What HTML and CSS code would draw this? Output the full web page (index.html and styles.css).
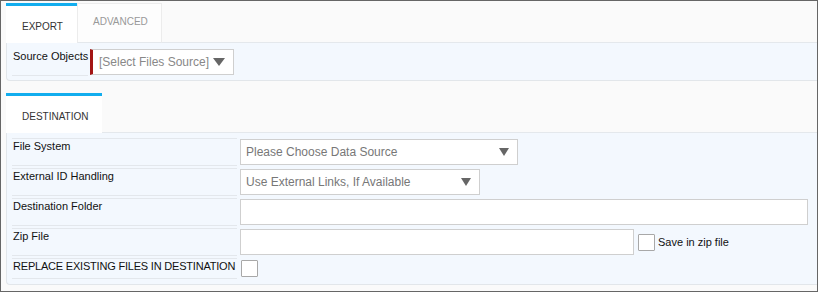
FILE: index.html
```html
<!DOCTYPE html>
<html lang="en">
<head>
  <meta charset="UTF-8" />
  <title>Export</title>
  <link rel="stylesheet" href="styles.css">
</head>
<body>
  <div class="frame">
    <div class="tabs">
      <div class="tab active export-tab">EXPORT</div>
      <div class="tab advanced-tab">ADVANCED</div>
      <div class="tab-fill"></div>
    </div>
    <div class="panel source">
      <div class="row">
        <div class="label source-label">Source Objects</div>
        <div class="select required source-select"><span>[Select Files Source]</span><span class="caret"></span></div>
      </div>
    </div>

    <div class="tabs second">
      <div class="tab active dest-tab">DESTINATION</div>
      <div class="tab-fill"></div>
    </div>
    <div class="panel dest">
      <div class="row">
        <div class="label">File System</div>
        <div class="select fs-select"><span>Please Choose Data Source</span><span class="caret"></span></div>
      </div>
      <div class="row">
        <div class="label">External ID Handling</div>
        <div class="select ext-select"><span>Use External Links, If Available</span><span class="caret"></span></div>
      </div>
      <div class="row">
        <div class="label">Destination Folder</div>
        <input class="text-input folder-input" type="text">
      </div>
      <div class="row">
        <div class="label">Zip File</div>
        <div class="inline">
          <input class="text-input zip-input" type="text">
          <span class="check"></span>
          <span class="check-text">Save in zip file</span>
        </div>
      </div>
      <div class="row last">
        <div class="label replace-label">REPLACE EXISTING FILES IN DESTINATION</div>
        <span class="check replace-check"></span>
      </div>
    </div>
  </div>
</body>
</html>
```

FILE: styles.css
```css
* { box-sizing: border-box; }
body {
  margin: 0;
  font-family: "Liberation Sans", Arial, sans-serif;
  font-size: 11px;
  color: #111;
}
.frame {
  height: 292px;
  border: 1px solid #666;
  background: #fafafa;
  padding: 2px 0 0 5px;
}
.tabs {
  display: flex;
  height: 40px;
}
.tabs.second { margin-top: 12px; }
.tab {
  display: flex;
  align-items: center;
  padding: 0 0 4px 15px;
  font-size: 10px;
  white-space: nowrap;
  color: #999;
  background: #fdfdfd;
  border: 1px solid #ececec;
  border-bottom-color: #e4e8ec;
}
.tab.active {
  padding: 3px 0 0 16px;
  color: #333;
  background: #fff;
  border: none;
  border-top: 3px solid #12adee;
}
.export-tab { width: 71px; }
.advanced-tab { width: 85px; }
.dest-tab { width: 96px; }
.tab-fill {
  flex: 1;
  border-bottom: 1px solid #e4e8ec;
}
.panel {
  background: #f3f8fe;
  border-left: 1px solid #e2e6ea;
  border-bottom: 1px solid #e2e6ea;
  border-bottom-left-radius: 4px;
  padding: 6px 0 4px 5px;
}
.panel.dest {
  padding: 5px 0 5px 5px;
  display: flex;
  flex-direction: column;
  gap: 2px;
}
.row {
  display: flex;
  align-items: flex-start;
  gap: 3px;
}
.label {
  width: 225px;
  height: 28px;
  padding: 1px 0 0 1px;
  line-height: 13px;
  white-space: nowrap;
  border-top: 1px solid #e3e7ec;
  border-bottom: 1px solid #e3e7ec;
}
.row.last .label { height: 21px; }
.replace-label { letter-spacing: -0.2px; }
.source-label {
  width: 76px;
  height: 27px;
  border-top: none;
}
.select {
  display: flex;
  align-items: center;
  justify-content: space-between;
  height: 26px;
  margin-top: 1px;
  padding: 0 8px 0 5px;
  background: #fff;
  border: 1px solid #cfcfcf;
  font-size: 12px;
  color: #777;
}
.source-select {
  margin-top: 0;
  margin-left: -1px;
  width: 144px;
  color: #888;
  padding-left: 6px;
}
.required { border-left: 3px solid #a31515; }
.fs-select { width: 278px; }
.ext-select { width: 240px; }
.caret {
  width: 0;
  height: 0;
  border-left: 5px solid transparent;
  border-right: 5px solid transparent;
  border-top: 8px solid #666;
}
.source-select .caret {
  border-left-width: 6px;
  border-right-width: 6px;
  border-top-width: 8px;
}
.text-input {
  height: 26px;
  margin: 1px 0 0;
  padding: 0 5px;
  background: #fff;
  border: 1px solid #cfcfcf;
  font: 12px "Liberation Sans", Arial, sans-serif;
}
.folder-input { width: 568px; }
.zip-input { width: 394px; margin-top: 0; }
.inline {
  display: flex;
  align-items: center;
  margin-top: 1px;
}
.check {
  width: 17px;
  height: 17px;
  background: #fff;
  border: 1px solid #a8a8a8;
  border-radius: 1px;
  margin-left: 4px;
}
.check-text { margin-left: 3px; }
.replace-check { margin: 2px 0 0 1px; }
```
